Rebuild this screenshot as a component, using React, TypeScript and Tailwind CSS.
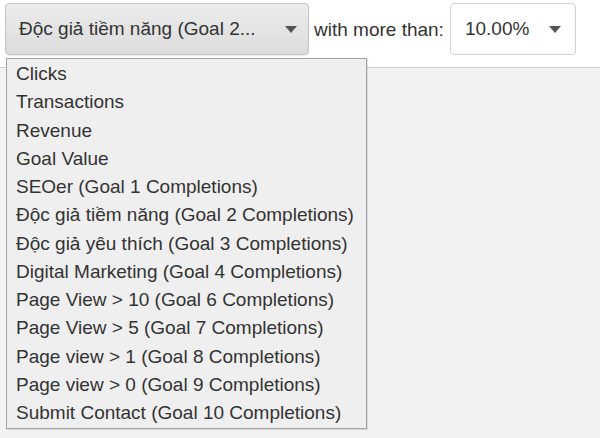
import React from "react";

const items = [
  "Clicks",
  "Transactions",
  "Revenue",
  "Goal Value",
  "SEOer (Goal 1 Completions)",
  "Độc giả tiềm năng (Goal 2 Completions)",
  "Độc giả yêu thích (Goal 3 Completions)",
  "Digital Marketing (Goal 4 Completions)",
  "Page View > 10 (Goal 6 Completions)",
  "Page View > 5 (Goal 7 Completions)",
  "Page view > 1 (Goal 8 Completions)",
  "Page view > 0 (Goal 9 Completions)",
  "Submit Contact (Goal 10 Completions)",
];

function Caret() {
  return (
    <svg width="12" height="7" viewBox="0 0 12 7">
      <path d="M0 0 L12 0 L6 7 Z" fill="#555" />
    </svg>
  );
}

export default function App() {
  return (
    <div
      className="relative w-[600px] h-[438px] overflow-hidden bg-[#f3f3f3] text-[#333]"
      style={{ fontFamily: '"Liberation Sans", Arial, sans-serif' }}
    >
      <div className="h-[68px] bg-white border-b border-[#cfcfcf] flex items-start pt-[3px] pl-[5px]">
        <div className="w-[304px] h-[52px] rounded-[4px] border border-[#c4c4c4] bg-gradient-to-b from-[#ececec] to-[#dcdcdc] flex items-center pl-[13px] pr-[11px] shadow-[0_1px_1px_rgba(0,0,0,0.08)]">
          <span className="text-[19px] flex-1 whitespace-nowrap">Độc giả tiềm năng (Goal 2...</span>
          <Caret />
        </div>
        <span className="text-[19px] ml-[5px] mt-[13px] whitespace-nowrap">with more than:</span>
        <div className="ml-[6px] w-[126px] h-[52px] rounded-[4px] border border-[#d2d2d2] bg-white flex items-center pl-[14px] pr-[14px]">
          <span className="text-[19px] flex-1">10.00%</span>
          <Caret />
        </div>
      </div>
      <div className="absolute left-[6px] top-[58px] w-[361px] border border-[#a3a3a3] bg-[#efefef] pt-[1px] pb-[1px] shadow-[1px_1px_1px_rgba(0,0,0,0.1)]">
        {items.map((t) => (
          <div key={t} className="h-[28.25px] leading-[28px] pl-[9px] text-[19px] whitespace-nowrap">
            {t}
          </div>
        ))}
      </div>
    </div>
  );
}
